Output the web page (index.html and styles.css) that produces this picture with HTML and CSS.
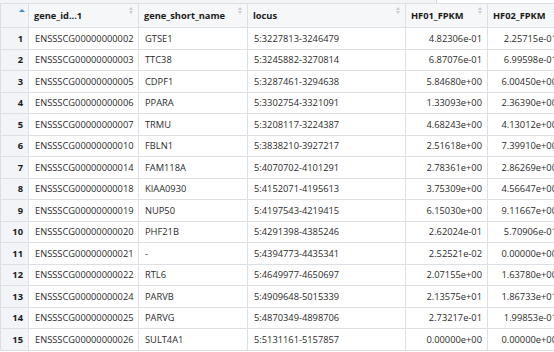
FILE: index.html
```html
<!DOCTYPE html>
<html>
<head>
<meta charset="utf-8">
<link rel="stylesheet" href="styles.css">
</head>
<body>
<div class="topbar"><div class="filterbox"></div></div>
<table class="grid">
<colgroup>
<col class="c-num"><col class="c-id"><col class="c-name"><col class="c-locus"><col class="c-hf"><col class="c-hf2">
</colgroup>
<thead>
<tr>
<th class="num"><span class="asc"></span></th>
<th>gene_id...1<span class="sort"></span></th>
<th>gene_short_name<span class="sort"></span></th>
<th>locus<span class="sort"></span></th>
<th>HF01_FPKM<span class="sort"></span></th>
<th>HF02_FPKM<span class="sort"></span></th>
</tr>
</thead>
<tbody>
<tr><td class="num">1</td><td>ENSSSCG00000000002</td><td>GTSE1</td><td>5:3227813-3246479</td><td class="r">4.82306e-01</td><td class="r">2.25715e-01</td></tr>
<tr><td class="num">2</td><td>ENSSSCG00000000003</td><td>TTC38</td><td>5:3245882-3270814</td><td class="r">6.87076e-01</td><td class="r">6.99598e-01</td></tr>
<tr><td class="num">3</td><td>ENSSSCG00000000005</td><td>CDPF1</td><td>5:3287461-3294638</td><td class="r">5.84680e+00</td><td class="r">6.00450e+00</td></tr>
<tr><td class="num">4</td><td>ENSSSCG00000000006</td><td>PPARA</td><td>5:3302754-3321091</td><td class="r">1.33093e+00</td><td class="r">2.36390e+00</td></tr>
<tr><td class="num">5</td><td>ENSSSCG00000000007</td><td>TRMU</td><td>5:3208117-3224387</td><td class="r">4.68243e+00</td><td class="r">4.13012e+00</td></tr>
<tr><td class="num">6</td><td>ENSSSCG00000000010</td><td>FBLN1</td><td>5:3838210-3927217</td><td class="r">2.51618e+00</td><td class="r">7.39910e+00</td></tr>
<tr><td class="num">7</td><td>ENSSSCG00000000014</td><td>FAM118A</td><td>5:4070702-4101291</td><td class="r">2.78361e+00</td><td class="r">2.86269e+00</td></tr>
<tr><td class="num">8</td><td>ENSSSCG00000000018</td><td>KIAA0930</td><td>5:4152071-4195613</td><td class="r">3.75309e+00</td><td class="r">4.56647e+00</td></tr>
<tr><td class="num">9</td><td>ENSSSCG00000000019</td><td>NUP50</td><td>5:4197543-4219415</td><td class="r">6.15030e+00</td><td class="r">9.11667e+00</td></tr>
<tr><td class="num">10</td><td>ENSSSCG00000000020</td><td>PHF21B</td><td>5:4291398-4385246</td><td class="r">2.62024e-01</td><td class="r">5.70906e-01</td></tr>
<tr><td class="num">11</td><td>ENSSSCG00000000021</td><td>-</td><td>5:4394773-4435341</td><td class="r">2.52521e-02</td><td class="r">0.00000e+00</td></tr>
<tr><td class="num">12</td><td>ENSSSCG00000000022</td><td>RTL6</td><td>5:4649977-4650697</td><td class="r">2.07155e+00</td><td class="r">1.63780e+00</td></tr>
<tr><td class="num">13</td><td>ENSSSCG00000000024</td><td>PARVB</td><td>5:4909648-5015339</td><td class="r">2.13575e+01</td><td class="r">1.86733e+01</td></tr>
<tr><td class="num">14</td><td>ENSSSCG00000000025</td><td>PARVG</td><td>5:4870349-4898706</td><td class="r">2.73217e-01</td><td class="r">1.99853e-01</td></tr>
<tr><td class="num">15</td><td>ENSSSCG00000000026</td><td>SULT4A1</td><td>5:5131161-5157857</td><td class="r">0.00000e+00</td><td class="r">0.00000e+00</td></tr>
</tbody>
</table>
</body>
</html>
```
FILE: styles.css
```css
html, body {
  margin: 0;
  padding: 0;
  background: #ffffff;
  overflow: hidden;
}
body {
  width: 554px;
  height: 352px;
  font-family: "Open Sans", "Noto Sans", sans-serif;
  font-size: 9.3px;
  color: #2b2b2b;
}
.topbar {
  height: 3px;
  background: #f3f4f6;
  display: flex;
  justify-content: flex-end;
}
.filterbox {
  width: 118px;
  height: 3px;
  background: #ffffff;
  border-left: 1px solid #d6d9dd;
  box-sizing: border-box;
}
.grid {
  border-collapse: collapse;
  table-layout: fixed;
  width: 562px;
}
.c-num { width: 28px; }
.c-id { width: 110px; }
.c-name { width: 109px; }
.c-locus { width: 158px; }
.c-hf { width: 82px; }
.c-hf2 { width: 75px; }
.grid th {
  height: 24px;
  box-sizing: border-box;
  background: #f6f7f8;
  border: 1px solid #dcdfe3;
  text-align: left;
  font-weight: 700;
  color: #1a1a1a;
  padding: 0 5px;
  position: relative;
  white-space: nowrap;
  overflow: hidden;
}
.grid th.num {
  background: #f2f4f7;
}
.grid td {
  height: 21.5px;
  box-sizing: border-box;
  border: 1px solid #dcdfe3;
  padding: 0 6px;
  white-space: nowrap;
  overflow: hidden;
}
.grid td.num {
  background: #f2f4f7;
  font-weight: 700;
  text-align: right;
  color: #1a1a1a;
  padding-right: 5px;
}
.grid td.r {
  text-align: right;
  padding-right: 5px;
}
.sort {
  position: absolute;
  right: 4px;
  top: 3px;
  width: 5px;
  height: 8px;
}
.sort::before, .sort::after {
  content: "";
  position: absolute;
  left: 0;
  border-left: 2.5px solid transparent;
  border-right: 2.5px solid transparent;
}
.sort::before {
  top: 0;
  border-bottom: 3px solid #c9cdd2;
}
.sort::after {
  top: 4px;
  border-top: 3px solid #c9cdd2;
}
.asc {
  position: absolute;
  left: 18px;
  top: 5px;
  border-left: 3px solid transparent;
  border-right: 3px solid transparent;
  border-bottom: 3px solid #3d8fd6;
}
```
